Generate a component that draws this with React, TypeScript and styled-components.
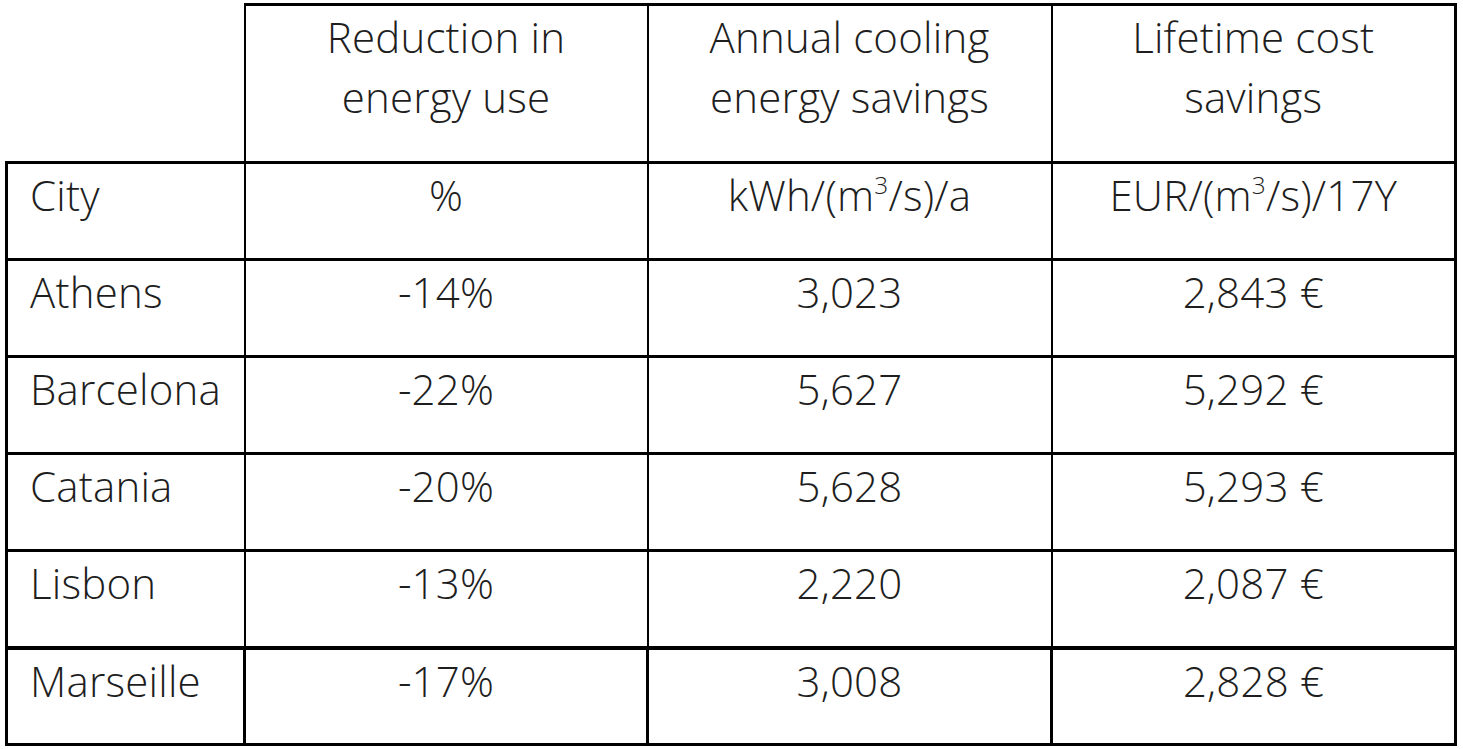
import React from "react";
import styled, { createGlobalStyle } from "styled-components";

const Global = createGlobalStyle`
  html, body {
    margin: 0;
    padding: 0;
    background: #ffffff;
  }
  body {
    font-family: "Open Sans", "Liberation Sans", sans-serif;
    font-weight: 300;
    color: #1e1e1e;
  }
`;

const Page = styled.div`
  padding: 3px 0 0 5px;
`;

const Table = styled.table`
  border-collapse: collapse;
  table-layout: fixed;
  width: 1449px;
  font-size: 42px;
  line-height: 60px;
  letter-spacing: 0.2px;
`;

const Col = styled.col<{ $w: number }>`
  width: ${(p) => p.$w}px;
`;

const Row = styled.tr<{ $h: number; $emph?: boolean }>`
  height: ${(p) => p.$h}px;
  ${(p) =>
    p.$emph
      ? `
    & > td { border-top-width: 4px; border-left-width: 3px; border-right-width: 3px; }
  `
      : ""}
`;

const Cell = styled.td<{ $first?: boolean }>`
  border-top: 3px solid #000;
  border-bottom: 3px solid #000;
  border-left: 2px solid #000;
  border-right: 2px solid #000;
  vertical-align: top;
  padding: 1px 0 0 ${(p) => (p.$first ? "22px" : "0")};
  text-align: ${(p) => (p.$first ? "left" : "center")};
  white-space: nowrap;
  &:first-child {
    border-left-width: 3px;
  }
  &:last-child {
    border-right-width: 3px;
  }
`;

const Blank = styled.td`
  border: none;
`;

const HeadCell = styled(Cell)`
  white-space: normal;
`;

const Sup = styled.sup`
  font-size: 0.58em;
  line-height: 0;
  vertical-align: 0.7em;
`;

const Unit = ({ before, after }: { before: string; after: string }) => (
  <>
    {before}
    <Sup>3</Sup>
    {after}
  </>
);

const rows = [
  ["Athens", "-14%", "3,023", "2,843 €"],
  ["Barcelona", "-22%", "5,627", "5,292 €"],
  ["Catania", "-20%", "5,628", "5,293 €"],
  ["Lisbon", "-13%", "2,220", "2,087 €"],
  ["Marseille", "-17%", "3,008", "2,828 €"],
];

export default function App() {
  return (
    <>
      <Global />
      <Page>
        <Table>
          <colgroup>
            <Col $w={238} />
            <Col $w={403} />
            <Col $w={404} />
            <Col $w={404} />
          </colgroup>
          <tbody>
            <Row $h={158}>
              <Blank />
              <HeadCell>
                Reduction in
                <br />
                energy use
              </HeadCell>
              <HeadCell>
                Annual cooling
                <br />
                energy savings
              </HeadCell>
              <HeadCell>
                Lifetime cost
                <br />
                savings
              </HeadCell>
            </Row>
            <Row $h={97}>
              <Cell $first>City</Cell>
              <Cell>%</Cell>
              <Cell>
                <Unit before="kWh/(m" after="/s)/a" />
              </Cell>
              <Cell>
                <Unit before="EUR/(m" after="/s)/17Y" />
              </Cell>
            </Row>
            {rows.map((r, i) => (
              <Row key={r[0]} $h={97} $emph={i === rows.length - 1}>
                <Cell $first>{r[0]}</Cell>
                <Cell>{r[1]}</Cell>
                <Cell>{r[2]}</Cell>
                <Cell>{r[3]}</Cell>
              </Row>
            ))}
          </tbody>
        </Table>
      </Page>
    </>
  );
}
